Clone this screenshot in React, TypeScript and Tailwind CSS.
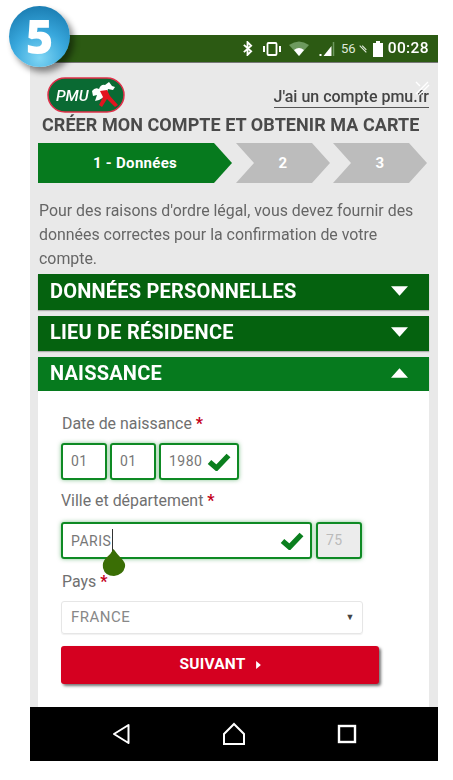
import React from "react";

const Check = ({ className }: { className: string }) => (
  <svg viewBox="0 0 24 18" className={className}>
    <path d="M2.5 9 L9.5 15 L21.5 2.5" fill="none" stroke="#0b7f1e" strokeWidth="5.4" />
  </svg>
);

const Tri = ({ up }: { up?: boolean }) => (
  <svg viewBox="0 0 18 10" className="w-[17px] h-[10px]">
    <path d={up ? "M0 10 L9 0 L18 10 Z" : "M0 0 L18 0 L9 10 Z"} fill="#fff" />
  </svg>
);

const Section = ({ title, open, h }: { title: string; open?: boolean; h: string }) => (
  <div
    className={`${h} ${open ? "bg-[#067a1e]" : "bg-[#05620f]"} flex items-center justify-between pl-3 pr-[21px] pb-[3px] text-white text-[20px] font-bold tracking-[0.2px] shadow-[0_1px_1px_rgba(0,0,0,0.25)]`}
  >
    <span>{title}</span>
    <Tri up={open} />
  </div>
);

const Label = ({ text, className }: { text: string; className: string }) => (
  <div className={`${className} text-[15.9px] leading-5 text-[#707070]`}>
    {text} <span className="text-[#c4001a] font-bold">*</span>
  </div>
);

const fieldCls =
  "h-[37px] border-2 border-[#0e8a24] rounded-[3px] shadow-[0_0_4px_rgba(14,138,36,0.5)] flex items-center pl-2 text-[14px] text-[#777] tracking-[0.5px]";

export default function App() {
  return (
    <div className="relative w-[453px] h-[780px] bg-white font-['Roboto',sans-serif] overflow-hidden">
      <div className="absolute left-[9px] top-[6px] w-[61px] h-[61px] rounded-full z-10 flex items-center justify-center bg-[radial-gradient(circle_at_50%_85%,#7fd6f5_0%,#38a7dc_45%,#1c7fb4_85%,#15689a_100%)] shadow-[4px_5px_6px_rgba(0,0,0,0.45)] text-white text-[47px] font-extrabold font-['Open_Sans',sans-serif] leading-none">
        5
      </div>

      <div className="ml-[30px] pt-[35px] w-[408px] h-[761px] flex flex-col blur-[0.6px]">
        <div className="h-[28px] bg-[#2c5a13] border-b border-[#777] flex items-center justify-end pr-[9px] text-white shrink-0">
          <svg viewBox="0 0 12 16" className="w-[11px] h-[15px] mr-[9px]">
            <path d="M2 4 L10 11 L6 15 V1 L10 5 L2 12" fill="none" stroke="#fff" strokeWidth="2" />
          </svg>
          <svg viewBox="0 0 20 14" className="w-[20px] h-[14px] mr-[7px]">
            <rect x="5.5" y="1" width="9" height="12" rx="1" fill="none" stroke="#fff" strokeWidth="1.8" />
            <path d="M2 4 V10 M18 4 V10" stroke="#fff" strokeWidth="2" />
          </svg>
          <svg viewBox="0 0 20 15" className="w-[20px] h-[15px] mr-[10px]">
            <path d="M0 4 Q10 -3 20 4 L10 15 Z" fill="#6d9a5e" />
            <path d="M5 9 Q10 5 15 9 L10 15 Z" fill="#fff" />
          </svg>
          <svg viewBox="0 0 16 15" className="w-[17px] h-[15px] mr-[5px]">
            <path d="M0 15 H2 V13 H0 Z M4 15 L12 5 V15 Z" fill="#fff" />
            <path d="M14 1 V15" stroke="#6d9a5e" strokeWidth="1.5" />
          </svg>
          <span className="text-[13px] mr-[2px] text-[#dfe8da]">56</span>
          <svg viewBox="0 0 12 12" className="w-[10px] h-[10px] mr-[5px]">
            <path d="M2 2 L10 10 M5 2 L10 7" stroke="#dfe8da" strokeWidth="1.4" />
          </svg>
          <svg viewBox="0 0 10 16" className="w-[10px] h-[16px] mr-[5px]">
            <path d="M3 0 H7 V2 H10 V16 H0 V2 H3 Z" fill="#fff" />
          </svg>
          <span className="text-[15.5px] font-medium tracking-[0.4px]">00:28</span>
        </div>

        <div className="relative flex-1 bg-[#e9e9e9] px-[8px] pr-[9px] min-h-0 flex flex-col">
          <div className="h-[46px] mt-[14px] flex justify-between items-start shrink-0">
            <svg viewBox="0 0 78 36" className="w-[78px] h-[36px] ml-[9px]">
              <rect x="1" y="1" width="76" height="34" rx="17" fill="#0a6a33" stroke="#e0304a" strokeWidth="1.5" />
              <text x="9" y="24" fontFamily="Roboto, sans-serif" fontStyle="italic" fontWeight="500" fontSize="15.5" fill="#fff">PMU</text>
              <path d="M45 14 Q48 10 52 12 Q54 7 58 8 L62 5 L65 9 L68 10 L66 13 L61 12 Q60 17 57 20 L52 23 L48 24 L50 18 L46 19 Z" fill="#fff" />
              <path d="M53 14 L60 13 L63 19 L71 28 L68 30 L60 22 L55 30 L52 28 L56 20 Z" fill="#e3141f" />
            </svg>
            <span className="mt-[9px] text-[#444] text-[16px] font-medium border-b border-[#555] leading-[21px] whitespace-nowrap">
              J'ai un compte pmu.fr
            </span>
          </div>
          <div className="absolute right-[8px] top-[17px] w-[16px] h-[16px]">
            <svg viewBox="0 0 16 16" className="w-full h-full">
              <path d="M2 14 L14 2 M5 15 L15 5 M2 2 L6 6" stroke="#fff" strokeWidth="1.4" />
            </svg>
          </div>
          <div className="ml-[4px] mt-[-11px] h-[26px] text-[18px] leading-[26px] font-bold tracking-[0.06px] text-[#4a4a4a] whitespace-nowrap shrink-0">
            CRÉER MON COMPTE ET OBTENIR MA CARTE
          </div>
          <div className="mt-[5px] flex h-[40px] shrink-0 text-[15px] font-bold text-white tracking-[0.3px]">
            <div className="w-[194px] bg-[#067a1e] flex items-center justify-center [clip-path:polygon(0_0,176px_0,100%_50%,176px_100%,0_100%)]">
              1 - Données
            </div>
            <div className="w-[94px] ml-[4px] bg-[#bcbcbc] flex items-center justify-center [clip-path:polygon(0_0,76px_0,100%_50%,76px_100%,0_100%,18px_50%)]">
              2
            </div>
            <div className="w-[94px] ml-[3px] bg-[#bcbcbc] flex items-center justify-center [clip-path:polygon(0_0,76px_0,100%_50%,76px_100%,0_100%,18px_50%)]">
              3
            </div>
          </div>

          <p className="mt-[16px] pl-[1px] pr-[10px] text-[15.9px] leading-[24px] text-[#666] shrink-0">
            Pour des raisons d'ordre légal, vous devez fournir des données correctes pour la confirmation de votre compte.
          </p>

          <div className="mt-[3px] flex flex-col gap-[6px] shrink-0">
            <Section title="DONNÉES PERSONNELLES" h="h-[36px]" />
            <Section title="LIEU DE RÉSIDENCE" h="h-[35px]" />
          </div>
          <div className="mt-[6px] shrink-0">
            <Section title="NAISSANCE" open h="h-[34px]" />
          </div>

          <div className="flex-1 bg-white pl-[23px] pt-[23px]">
            <Label text="Date de naissance" className="ml-[1px]" />
            <div className="mt-[9px] flex gap-[3px]">
              <div className={`${fieldCls} w-[46px]`}>01</div>
              <div className={`${fieldCls} w-[46px]`}>01</div>
              <div className={`${fieldCls} w-[80px] justify-between pr-[6px]`}>
                1980
                <Check className="w-[24px] h-[18px] shrink-0" />
              </div>
            </div>
            <Label text="Ville et département" className="mt-[11px]" />
            <div className="relative mt-[11px] flex gap-[4px]">
              <div className={`${fieldCls} w-[251px] justify-between pr-[6px]`}>
                <span className="border-r border-[#333] leading-[24px] pr-[1px]">PARIS</span>
                <Check className="w-[24px] h-[18px] shrink-0" />
              </div>
              <div className={`${fieldCls} w-[46px] bg-[#ececec] text-[#bbb]`}>75</div>
              <svg viewBox="0 0 24 27" className="absolute left-[41px] top-[27px] w-[24px] h-[27px]">
                <path d="M11.5 0 Q15 5 19 9 Q24 14 23 18 Q21 26 12 27 Q3 27 1 19 Q0 13 4 9 Q9 5 11.5 0 Z" fill="#3a6e05" />
              </svg>
            </div>
            <Label text="Pays" className="mt-[13px] ml-[1px]" />
            <div className="mt-[9px] w-[302px] h-[33px] border border-[#e6e6e6] rounded-[3px] flex items-center justify-between pl-[9px] pr-[7px] text-[15px] text-[#888] tracking-[0.5px] shadow-[0_1px_1px_rgba(0,0,0,0.06)]">
              FRANCE
              <span className="text-[9px] text-[#444]">▼</span>
            </div>
            <div className="mt-[12px] w-[318px] h-[38px] bg-[#d50020] rounded-[3px] shadow-[2px_2px_3px_rgba(0,0,0,0.55)] flex items-center justify-center gap-[10px] text-white text-[15.5px] font-bold tracking-[0.2px]">
              SUIVANT
              <svg viewBox="0 0 6 10" className="w-[5px] h-[8px]">
                <path d="M0 0 L6 5 L0 10 Z" fill="#fff" />
              </svg>
            </div>
          </div>
        </div>

        <div className="h-[54px] bg-black shrink-0 flex items-center justify-center gap-[91px] pr-[1px]">
          <svg viewBox="0 0 20 22" className="w-[20px] h-[22px]">
            <path d="M17.5 2 L3 11 L17.5 20 Z" fill="none" stroke="#fff" strokeWidth="2" strokeLinejoin="round" />
          </svg>
          <svg viewBox="0 0 24 24" className="w-[24px] h-[24px]">
            <path d="M12 2 L22 12 V22 H2 V12 Z" fill="none" stroke="#fff" strokeWidth="2" />
          </svg>
          <svg viewBox="0 0 20 20" className="w-[20px] h-[20px]">
            <rect x="2" y="2" width="16" height="16" fill="none" stroke="#fff" strokeWidth="2.4" />
          </svg>
        </div>
      </div>
    </div>
  );
}
